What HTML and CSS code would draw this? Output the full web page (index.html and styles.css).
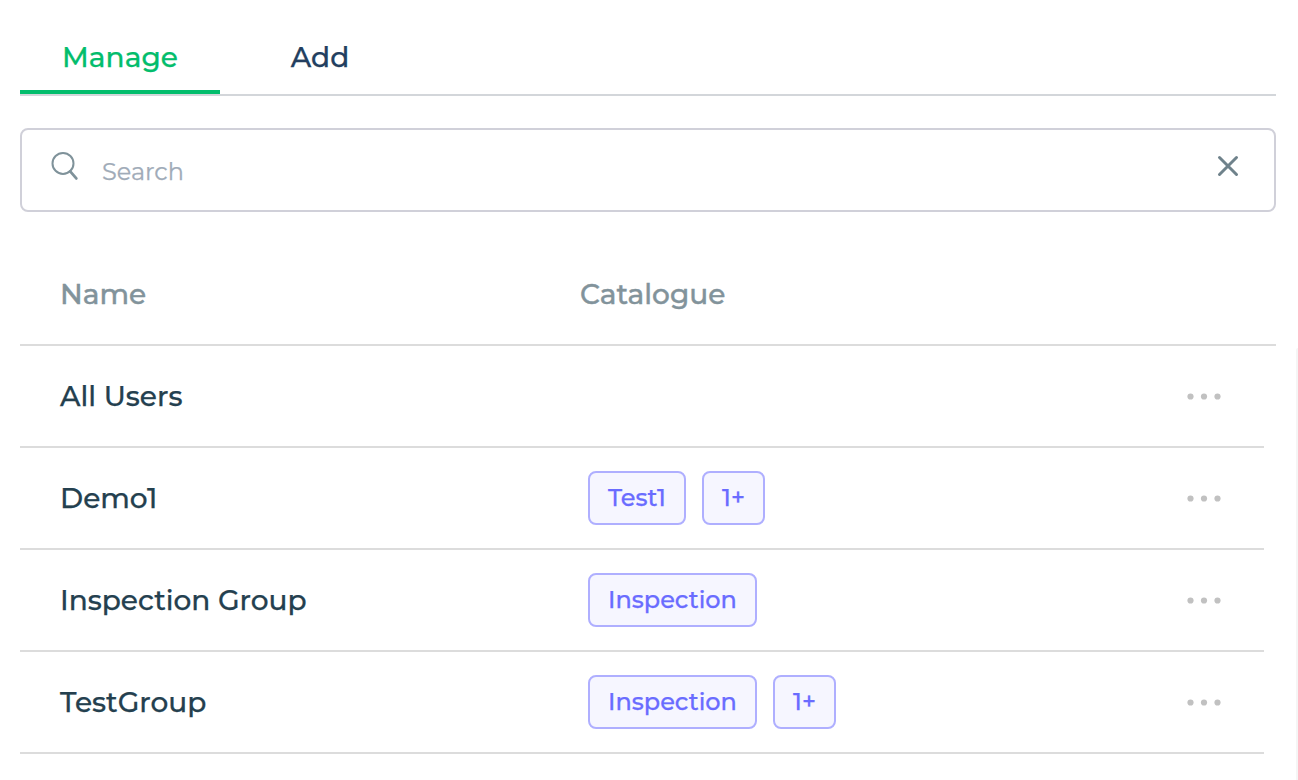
FILE: index.html
```html
<!DOCTYPE html>
<html lang="en">
<head>
<meta charset="utf-8">
<title>Manage groups</title>
<link rel="stylesheet" href="styles.css">
</head>
<body>
<main class="panel">
  <nav class="tabs">
    <a class="tab tab-active">Manage</a>
    <a class="tab">Add</a>
  </nav>
  <div class="search">
    <svg class="search-icon" width="30" height="32" viewBox="0 0 30 32" fill="none" stroke="#7f929a" stroke-linecap="round"><circle cx="13" cy="13.4" r="10.5" stroke-width="2"/><path d="M20.2 21.4L26.3 28.4" stroke-width="2.8"/></svg>
    <span class="placeholder">Search</span>
    <svg class="clear-icon" width="24" height="24" viewBox="0 0 24 24" fill="none" stroke="#6f828b" stroke-width="3" stroke-linecap="round"><path d="M3.5 3.5L20.5 20.5M20.5 3.5L3.5 20.5"/></svg>
  </div>
  <div class="head">
    <span class="name">Name</span>
    <span>Catalogue</span>
  </div>
  <div class="body">
    <div class="rows">
      <div class="row">
        <span class="name">All Users</span><div class="tags"></div>
        <svg class="dots" width="36" height="8" viewBox="0 0 36 8" fill="#c1c1c1"><circle cx="4.5" cy="4.5" r="3.1"/><circle cx="18" cy="4.5" r="3.1"/><circle cx="31.5" cy="4.5" r="3.1"/></svg>
      </div>
      <div class="row">
        <span class="name">Demo1</span>
        <div class="tags"><span class="tag tag-test">Test1</span><span class="tag tag-more">1+</span></div>
        <svg class="dots" width="36" height="8" viewBox="0 0 36 8" fill="#c1c1c1"><circle cx="4.5" cy="4.5" r="3.1"/><circle cx="18" cy="4.5" r="3.1"/><circle cx="31.5" cy="4.5" r="3.1"/></svg>
      </div>
      <div class="row">
        <span class="name">Inspection Group</span>
        <div class="tags"><span class="tag tag-inspection">Inspection</span></div>
        <svg class="dots" width="36" height="8" viewBox="0 0 36 8" fill="#c1c1c1"><circle cx="4.5" cy="4.5" r="3.1"/><circle cx="18" cy="4.5" r="3.1"/><circle cx="31.5" cy="4.5" r="3.1"/></svg>
      </div>
      <div class="row">
        <span class="name">TestGroup</span>
        <div class="tags"><span class="tag tag-inspection">Inspection</span><span class="tag tag-more">1+</span></div>
        <svg class="dots" width="36" height="8" viewBox="0 0 36 8" fill="#c1c1c1"><circle cx="4.5" cy="4.5" r="3.1"/><circle cx="18" cy="4.5" r="3.1"/><circle cx="31.5" cy="4.5" r="3.1"/></svg>
      </div>
    </div>
    <div class="scroll-track"></div>
  </div>
</main>
</body>
</html>
```
FILE: styles.css
```css
* { box-sizing: border-box; }
body { margin: 0; background: #fff; font-family: Montserrat, Inter, sans-serif; font-size: 28px; font-weight: 500; color: #24404f; overflow: hidden; -webkit-text-stroke: .25px currentColor; }
.panel { height: 780px; padding: 20px 0 0 20px; display: flex; flex-direction: column; }
.tabs { display: flex; width: 1256px; height: 76px; border-bottom: 2px solid #d3d6da; flex: none; }
.tab { width: 200px; height: 74px; display: flex; justify-content: center; line-height: 34px; padding-top: 20px; color: #233f60; }
.tab-active { color: #03bd6c; border-bottom: 4px solid #03bd6c; }
.search { width: 1256px; height: 84px; margin-top: 32px; border: 2px solid #d0d0d9; border-radius: 8px; display: flex; align-items: flex-start; flex: none; padding: 20px 34px 0 28px; }
.placeholder { margin: 6px auto 0 22px; font-size: 24px; line-height: 32px; font-weight: 400; color: #a0abb8; }
.clear-icon { margin-top: 4px; }
.head { width: 1256px; height: 134px; padding: 64px 0 0 40px; line-height: 36px; border-bottom: 2px solid #dcdcdc; display: flex; color: #82939b; flex: none; -webkit-text-stroke-width: .4px; }
.name { width: 520px; flex: none; white-space: nowrap; }
.body { display: flex; flex: 1; min-height: 0; }
.rows { width: 1244px; flex: none; }
.row { height: 102px; border-bottom: 2px solid #dcdcdc; padding: 0 42px 0 40px; display: flex; align-items: center; }
.tags { display: flex; gap: 16px; margin-left: 8px; flex: 1; }
.tag { height: 54px; border: 2px solid #afafff; border-radius: 8px; background: #f6f6ff; color: #6a6cff; font-size: 24px; line-height: 49px; padding-left: 18px; white-space: nowrap; -webkit-text-stroke-color: #6a6cff; }
.tag-test { width: 98px; }
.tag-more { width: 63px; }
.tag-inspection { width: 169px; }
.scroll-track { width: 2px; margin: 2px 0 0 32px; background: #f5f5f5; border-top-left-radius: 2px; }
```
